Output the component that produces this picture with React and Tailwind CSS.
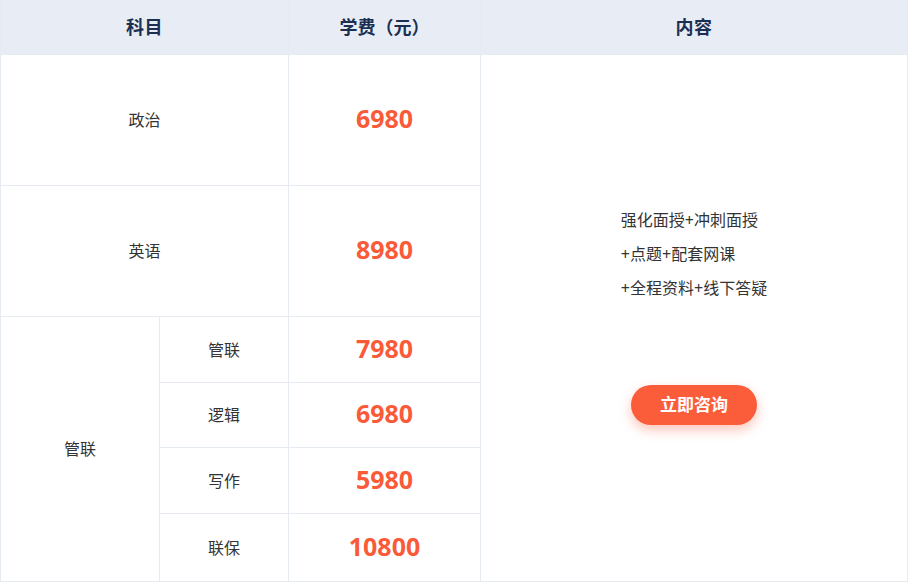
import React from 'react';

const font = { fontFamily: '"Noto Sans", "Noto Sans CJK SC", sans-serif' };

const Cell = ({ className = '', children }) => (
    <div className={`bg-white flex items-center justify-center ${className}`}>{children}</div>
);

const Price = ({ className = '', children }) => (
    <Cell className={className}>
        <span className="text-[25px] font-bold text-[#fa5a37] -translate-y-px">{children}</span>
    </Cell>
);

export default function App() {
    return (
        <div style={font} className="w-[908px] h-[582px] bg-white">
            <div className="grid grid-cols-[158px_128px_191px_426px] grid-rows-[54px_130px_130px_65px_64px_65px_67px] gap-px bg-[#e6ebf2] px-px pb-px text-[16px] text-[#333333]">
                {/* header */}
                <div className="col-start-1 col-span-2 row-start-1 bg-[#e8edf5] flex items-center justify-center text-[18px] font-bold text-[#1b2f52] tracking-[0.5px]">科目</div>
                <div className="col-start-3 row-start-1 bg-[#e8edf5] flex items-center justify-center text-[18px] font-bold text-[#1b2f52]">学费（元）</div>
                <div className="col-start-4 row-start-1 bg-[#e8edf5] flex items-center justify-center text-[18px] font-bold text-[#1b2f52] tracking-[0.5px]">内容</div>

                {/* 政治 / 英语 */}
                <Cell className="col-start-1 col-span-2 row-start-2">政治</Cell>
                <Price className="col-start-3 row-start-2">6980</Price>
                <Cell className="col-start-1 col-span-2 row-start-3">英语</Cell>
                <Price className="col-start-3 row-start-3">8980</Price>

                {/* 管联 group */}
                <Cell className="col-start-1 row-start-4 row-span-4">管联</Cell>
                <Cell className="col-start-2 row-start-4">管联</Cell>
                <Price className="col-start-3 row-start-4">7980</Price>
                <Cell className="col-start-2 row-start-5">逻辑</Cell>
                <Price className="col-start-3 row-start-5">6980</Price>
                <Cell className="col-start-2 row-start-6">写作</Cell>
                <Price className="col-start-3 row-start-6">5980</Price>
                <Cell className="col-start-2 row-start-7">联保</Cell>
                <Price className="col-start-3 row-start-7">10800</Price>

                {/* 内容 */}
                <div className="col-start-4 row-start-2 row-span-6 bg-white flex flex-col items-center justify-center pb-[9px]">
                    <div className="leading-[34px] text-[#333333]">
                        <p>强化面授+冲刺面授</p>
                        <p>+点题+配套网课</p>
                        <p>+全程资料+线下答疑</p>
                    </div>
                    <button className="mt-[80px] w-[126px] h-10 rounded-full bg-[#fb5d3b] text-white text-[17px] font-bold flex items-center justify-center shadow-[0_5px_12px_rgba(250,90,55,0.35)]">
                        立即咨询
                    </button>
                </div>
            </div>
        </div>
    );
}
